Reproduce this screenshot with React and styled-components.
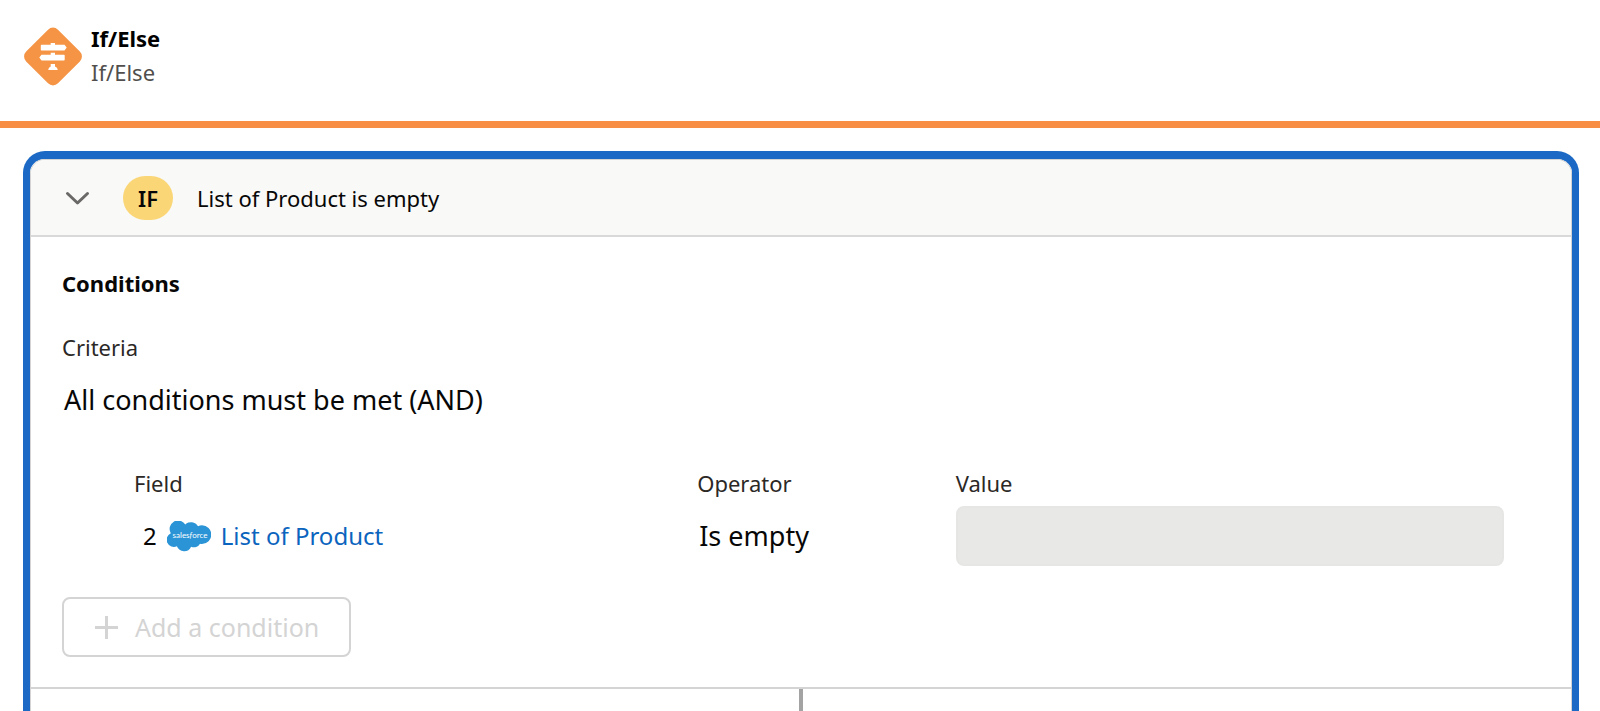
import React, { useState } from 'react'
import styled, { createGlobalStyle } from 'styled-components'

const GlobalStyle = createGlobalStyle`
  * {
    box-sizing: border-box;
  }
  body {
    margin: 0;
    background: #fff;
    color: #080707;
    font-family: "Noto Sans", "Open Sans", sans-serif;
  }
`

const Page = styled.div`
  display: flex;
  flex-direction: column;
  min-height: 100vh;
`

const Header = styled.header`
  display: flex;
  align-items: flex-start;
  gap: 8px;
  padding: 21px 24px 32px;
  border-bottom: 7px solid #f88d44;
`

const StepIcon = styled.svg`
  flex: none;
  width: 59px;
  height: 60px;
  margin-top: 6px;
`

const Title = styled.h1`
  margin: 0;
  font-size: 22px;
  line-height: 34px;
  font-weight: 700;
  color: #000;
`

const Subtitle = styled.p`
  margin: 0;
  font-size: 22px;
  line-height: 34px;
  color: #514f4d;
`

const Card = styled.main`
  display: flex;
  flex: 1;
  flex-direction: column;
  margin: 23px 21px 0 23px;
  border: 7px solid #1b69c4;
  border-top-width: 8px;
  border-bottom: none;
  border-radius: 22px 22px 0 0;
`

const CardInner = styled.div`
  display: flex;
  flex: 1;
  flex-direction: column;
  overflow: hidden;
  border: 1px solid #d4d4d4;
  border-bottom: none;
  border-radius: 15px 15px 0 0;
`

const CardHeader = styled.div`
  display: flex;
  align-items: center;
  padding: 16px 32px 15px;
  background: #f9f9f7;
  border-bottom: 2px solid #d9d9d9;
`

const ToggleButton = styled.button`
  display: flex;
  padding: 0;
  margin-right: 32px;
  border: none;
  background: none;
  color: #6b6967;
  cursor: pointer;

  svg {
    width: 28px;
    height: 28px;
    transform: ${(props) => (props.$open ? 'none' : 'rotate(-90deg)')};
  }
`

const Badge = styled.span`
  padding: 0 15px;
  margin-right: 24px;
  border-radius: 22px;
  background: #fad676;
  font-size: 22px;
  line-height: 44px;
  font-weight: 600;
`

const Summary = styled.h2`
  margin: 0;
  font-size: 22px;
  line-height: 44px;
  font-weight: 400;
`

const Section = styled.section`
  padding: 29px 31px 30px;
  border-bottom: 2px solid #d4d4d4;
`

const SectionTitle = styled.h3`
  margin: 0 0 30px;
  font-size: 22px;
  line-height: 34px;
  font-weight: 700;
`

const Label = styled.div`
  display: block;
  margin-bottom: 6px;
  font-size: 22px;
  line-height: 34px;
  color: #2b2826;
`

const Value = styled.div`
  padding: 0 2px;
  font-size: 27px;
  line-height: 60px;
`

const ConditionRow = styled.div`
  display: grid;
  grid-template-columns: 538fr 234fr 547fr;
  column-gap: 24px;
  padding: 0 36px 0 72px;
  margin: 36px 0 31px;
`

const FieldValue = styled.div`
  display: flex;
  align-items: center;
  gap: 10px;
  padding-left: 9px;
  font-size: 24px;
  line-height: 60px;
`

const Cloud = styled.svg`
  width: 44px;
  height: 31px;
`

const FieldLink = styled.a`
  color: #0b64bd;
  text-decoration: none;
`

const ValueInput = styled.input`
  display: block;
  width: 100%;
  height: 60px;
  padding: 0 16px;
  border: 2px solid #e6e6e5;
  border-radius: 8px;
  background: #e8e8e6;
  font: inherit;
`

const AddButton = styled.button`
  display: flex;
  align-items: center;
  gap: 16px;
  height: 60px;
  padding: 0 30px;
  border: 2px solid #d4d4d4;
  border-radius: 8px;
  background: #fff;
  color: #d4d4d4;
  font-family: inherit;
  font-size: 25px;

  svg {
    width: 25px;
    height: 25px;
  }
`

const Connector = styled.div`
  flex: 1;
  width: 4px;
  min-height: 20px;
  margin: 0 auto;
  background: #a3a3a3;
`

export default function App() {
  const [open, setOpen] = useState(true)

  return (
    <Page>
      <GlobalStyle />
      <Header>
        <StepIcon viewBox="0 0 59 60" aria-hidden="true">
          <rect x="6.500" y="7" width="45" height="45" rx="7" fill="#f59445" transform="rotate(45 29 29.500)" />
          <g fill="#fff">
            <path d="M26.700 16H31v1.700H40.500L42.700 20.500L40.500 23.400H17.500q-.7 0-.7-.7v-4.300q0-.7.7-.7H26.700z" />
            <path d="M26.700 25.800H31v1.900H40q.7 0 .7.700v4.300q0 .7-.7.700H17.500L15.300 30.500L17.500 27.700H26.700z" />
            <path d="M26.700 37H31v2.500q2.500.5 2.800 3.500h-9.600q.3-3 2.500-3.500z" />
          </g>
        </StepIcon>
        <div>
          <Title>If/Else</Title>
          <Subtitle>If/Else</Subtitle>
        </div>
      </Header>

      <Card>
        <CardInner>
          <CardHeader>
            <ToggleButton
              type="button"
              $open={open}
              aria-expanded={open}
              aria-labelledby="summary"
              onClick={() => setOpen(!open)}
            >
              <svg viewBox="0 0 28 28" fill="none" stroke="currentColor" strokeWidth="3" strokeLinecap="round" strokeLinejoin="round">
                <path d="M4.500 9.500L14.500 19L24.500 9.500" />
              </svg>
            </ToggleButton>
            <Badge>IF</Badge>
            <Summary id="summary">List of Product is empty</Summary>
          </CardHeader>

          {open && (
            <Section>
              <SectionTitle>Conditions</SectionTitle>
              <Label>Criteria</Label>
              <Value>All conditions must be met (AND)</Value>

              <ConditionRow>
                <div>
                  <Label>Field</Label>
                  <FieldValue>
                    2
                    <Cloud viewBox="0 0 44 31">
                      <path
                        fill="#2a94d6"
                        d="M18.300 3.600A8 8 0 0 1 31 5.200 9.500 9.500 0 0 1 35 4.300a9.300 9.300 0 0 1 0 18.600q-1.100 0-2-.2a6.800 6.800 0 0 1-8.900 3A7.700 7.700 0 0 1 9.900 25.300 7.200 7.200 0 0 1 3.800 12.200 8.300 8.300 0 0 1 18.300 3.600z"
                      />
                      <text x="23" y="17" fill="#fff" fontSize="8" fontFamily="Lato, sans-serif" textAnchor="middle">
                        sales<tspan fontStyle="italic">f</tspan>orce
                      </text>
                    </Cloud>
                    <FieldLink href="#product">List of Product</FieldLink>
                  </FieldValue>
                </div>
                <div>
                  <Label>Operator</Label>
                  <Value>Is empty</Value>
                </div>
                <div>
                  <Label as="label" htmlFor="value">Value</Label>
                  <ValueInput id="value" type="text" disabled />
                </div>
              </ConditionRow>

              <AddButton type="button" disabled>
                <svg viewBox="0 0 25 25" fill="none" stroke="currentColor" strokeWidth="3">
                  <path d="M12.500 1v23M1 12.500h23" />
                </svg>
                Add a condition
              </AddButton>
            </Section>
          )}
          <Connector />
        </CardInner>
      </Card>
    </Page>
  )
}
